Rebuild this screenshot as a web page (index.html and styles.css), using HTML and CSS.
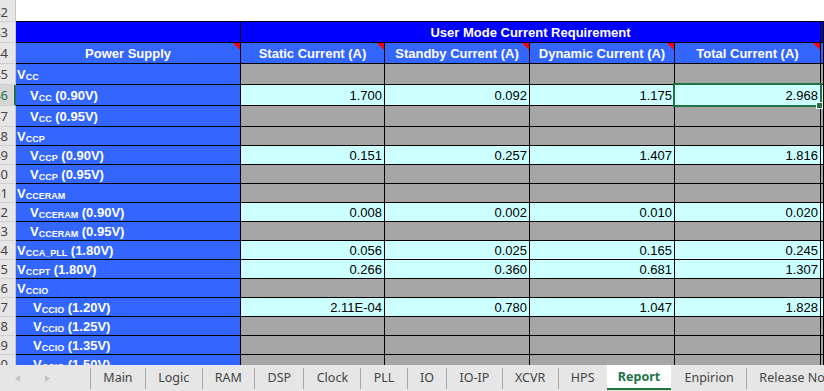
FILE: index.html
```html
<!DOCTYPE html>
<html lang="en">

<head>
    <meta charset="UTF-8">
    <meta name="viewport" content="width=device-width, initial-scale=1.0">
    <title>Report - User Mode Current Requirement</title>
    <link rel="stylesheet" href="styles.css">
</head>

<body>
    <!-- Lembar kerja -->
    <div class="sheet">
        <div class="row first">
            <div class="rh top-rh">42</div>
            <div class="c blank"></div>
            <div class="c blank"></div>
            <div class="c blank"></div>
            <div class="c blank"></div>
            <div class="c blank"></div>
            <div class="c blank"></div>
        </div>

        <div class="row tall">
            <div class="rh">43</div>
            <div class="c top"></div>
            <div class="c top merged">User Mode Current Requirement</div>
            <div class="c top"></div>
        </div>

        <div class="row tall">
            <div class="rh">44</div>
            <div class="c hd">Power Supply</div>
            <div class="c hd">Static Current (A)</div>
            <div class="c hd">Standby Current (A)</div>
            <div class="c hd">Dynamic Current (A)</div>
            <div class="c hd">Total Current (A)</div>
            <div class="c hd plain"></div>
        </div>

        <div class="row tall">
            <div class="rh">45</div>
            <div class="c lbl"><span>V<sub>CC</sub></span></div>
            <div class="c na"></div>
            <div class="c na"></div>
            <div class="c na"></div>
            <div class="c na"></div>
            <div class="c na"></div>
        </div>

        <div class="row tall">
            <div class="rh on">46</div>
            <div class="c lbl ind1"><span>V<sub>CC</sub> (0.90V)</span></div>
            <div class="c num">1.700</div>
            <div class="c num">0.092</div>
            <div class="c num">1.175</div>
            <div class="c num sel">2.968</div>
            <div class="c num"></div>
        </div>

        <div class="row tall">
            <div class="rh">47</div>
            <div class="c lbl ind1"><span>V<sub>CC</sub> (0.95V)</span></div>
            <div class="c na"></div>
            <div class="c na"></div>
            <div class="c na"></div>
            <div class="c na"></div>
            <div class="c na"></div>
        </div>

        <div class="row">
            <div class="rh">48</div>
            <div class="c lbl"><span>V<sub>CCP</sub></span></div>
            <div class="c na"></div>
            <div class="c na"></div>
            <div class="c na"></div>
            <div class="c na"></div>
            <div class="c na"></div>
        </div>

        <div class="row">
            <div class="rh">49</div>
            <div class="c lbl ind1"><span>V<sub>CCP</sub> (0.90V)</span></div>
            <div class="c num">0.151</div>
            <div class="c num">0.257</div>
            <div class="c num">1.407</div>
            <div class="c num">1.816</div>
            <div class="c num"></div>
        </div>

        <div class="row">
            <div class="rh">50</div>
            <div class="c lbl ind1"><span>V<sub>CCP</sub> (0.95V)</span></div>
            <div class="c na"></div>
            <div class="c na"></div>
            <div class="c na"></div>
            <div class="c na"></div>
            <div class="c na"></div>
        </div>

        <div class="row">
            <div class="rh">51</div>
            <div class="c lbl"><span>V<sub>CCERAM</sub></span></div>
            <div class="c na"></div>
            <div class="c na"></div>
            <div class="c na"></div>
            <div class="c na"></div>
            <div class="c na"></div>
        </div>

        <div class="row">
            <div class="rh">52</div>
            <div class="c lbl ind1"><span>V<sub>CCERAM</sub> (0.90V)</span></div>
            <div class="c num">0.008</div>
            <div class="c num">0.002</div>
            <div class="c num">0.010</div>
            <div class="c num">0.020</div>
            <div class="c num"></div>
        </div>

        <div class="row">
            <div class="rh">53</div>
            <div class="c lbl ind1"><span>V<sub>CCERAM</sub> (0.95V)</span></div>
            <div class="c na"></div>
            <div class="c na"></div>
            <div class="c na"></div>
            <div class="c na"></div>
            <div class="c na"></div>
        </div>

        <div class="row">
            <div class="rh">54</div>
            <div class="c lbl"><span>V<sub>CCA_PLL</sub> (1.80V)</span></div>
            <div class="c num">0.056</div>
            <div class="c num">0.025</div>
            <div class="c num">0.165</div>
            <div class="c num">0.245</div>
            <div class="c num"></div>
        </div>

        <div class="row">
            <div class="rh">55</div>
            <div class="c lbl"><span>V<sub>CCPT</sub> (1.80V)</span></div>
            <div class="c num">0.266</div>
            <div class="c num">0.360</div>
            <div class="c num">0.681</div>
            <div class="c num">1.307</div>
            <div class="c num"></div>
        </div>

        <div class="row">
            <div class="rh">56</div>
            <div class="c lbl"><span>V<sub>CCIO</sub></span></div>
            <div class="c na"></div>
            <div class="c na"></div>
            <div class="c na"></div>
            <div class="c na"></div>
            <div class="c na"></div>
        </div>

        <div class="row">
            <div class="rh">57</div>
            <div class="c lbl ind2"><span>V<sub>CCIO</sub> (1.20V)</span></div>
            <div class="c num">2.11E-04</div>
            <div class="c num">0.780</div>
            <div class="c num">1.047</div>
            <div class="c num">1.828</div>
            <div class="c num"></div>
        </div>

        <div class="row">
            <div class="rh">58</div>
            <div class="c lbl ind2"><span>V<sub>CCIO</sub> (1.25V)</span></div>
            <div class="c na"></div>
            <div class="c na"></div>
            <div class="c na"></div>
            <div class="c na"></div>
            <div class="c na"></div>
        </div>

        <div class="row">
            <div class="rh">59</div>
            <div class="c lbl ind2"><span>V<sub>CCIO</sub> (1.35V)</span></div>
            <div class="c na"></div>
            <div class="c na"></div>
            <div class="c na"></div>
            <div class="c na"></div>
            <div class="c na"></div>
        </div>

        <div class="row">
            <div class="rh">60</div>
            <div class="c lbl ind2"><span>V<sub>CCIO</sub> (1.50V)</span></div>
            <div class="c na"></div>
            <div class="c na"></div>
            <div class="c na"></div>
            <div class="c na"></div>
            <div class="c na"></div>
        </div>
    </div>

    <!-- Tab sheet -->
    <div class="tabbar">
        <div class="nav">
            <svg width="90" height="26" viewBox="0 0 90 26">
                <path d="M20 10 L15 13.5 L20 17 Z" fill="#c4c4c4" />
                <path d="M45 10 L50 13.5 L45 17 Z" fill="#c4c4c4" />
            </svg>
        </div>
        <div class="tab">Main</div>
        <div class="tab">Logic</div>
        <div class="tab">RAM</div>
        <div class="tab">DSP</div>
        <div class="tab">Clock</div>
        <div class="tab">PLL</div>
        <div class="tab">IO</div>
        <div class="tab">IO-IP</div>
        <div class="tab">XCVR</div>
        <div class="tab">HPS</div>
        <div class="tab active">Report</div>
        <div class="tab">Enpirion</div>
        <div class="tab">Release Notes</div>
    </div>
</body>

</html>
```

FILE: styles.css
```css
/* Gaya umum */
body {
    margin: 0;
    width: 824px;
    height: 391px;
    overflow: hidden;
    background-color: #ffffff;
    font-family: 'Liberation Sans', Arial, sans-serif;
    font-size: 13px;
}

/* Area lembar kerja */
.sheet {
    height: 365px;
    overflow: hidden;
}

.row {
    display: grid;
    grid-template-columns: 16px 225px 144px 145px 145px 146px 1fr;
    height: 19px;
}

.row.tall {
    height: 21px;
}

.row.first {
    height: 22px;
}

/* Sel dasar */
.c {
    box-sizing: border-box;
    display: flex;
    align-items: center;
    border-right: 1px solid #000;
    border-bottom: 1px solid #000;
    white-space: nowrap;
    overflow: hidden;
    line-height: 15px;
}

.blank {
    border-right: none;
}

/* Header baris */
.rh {
    box-sizing: border-box;
    display: flex;
    align-items: center;
    justify-content: flex-end;
    padding-right: 7px;
    background-color: #e6e6e6;
    border-right: 1px solid #c6c6c6;
    border-bottom: 1px solid #cfcfcf;
    color: #444;
    font-family: 'Noto Sans', sans-serif;
    font-size: 13px;
    line-height: 15px;
    white-space: nowrap;
    overflow: hidden;
}

.top-rh {
    align-items: flex-end;
    padding-bottom: 1px;
}

.rh.on {
    background-color: #d6d6d6;
    color: #217346;
    border-right: 2px solid #217346;
    padding-right: 6px;
}

/* Judul tabel */
.top {
    background-color: #0000ff;
    color: #fff;
    font-weight: bold;
    justify-content: center;
}

.merged {
    grid-column: span 4;
}

.hd {
    position: relative;
    background-color: #3366ff;
    color: #fff;
    font-weight: bold;
    justify-content: center;
}

/* Penanda komentar */
.hd::after {
    content: "";
    position: absolute;
    top: 0;
    right: 0;
    border-style: solid;
    border-width: 0 7px 7px 0;
    border-color: transparent #ff0000 transparent transparent;
}

.hd.plain::after {
    display: none;
}

/* Label catu daya */
.lbl {
    background-color: #3366ff;
    color: #fff;
    font-weight: bold;
    padding-left: 1px;
}

.ind1 {
    padding-left: 14px;
}

.ind2 {
    padding-left: 17px;
}

sub {
    font-size: 9px;
    line-height: 1;
    vertical-align: -1px;
}

/* Nilai arus */
.num {
    background-color: #ccffff;
    color: #000;
    justify-content: flex-end;
    padding-right: 2px;
}

.na {
    background-color: #a6a6a6;
}

/* Sel terpilih */
.sel {
    position: relative;
    overflow: visible;
}

.sel::before {
    content: "";
    position: absolute;
    left: -2px;
    top: -2px;
    right: -2px;
    bottom: -2px;
    border: 2px solid #217346;
}

.sel::after {
    content: "";
    position: absolute;
    right: -3px;
    bottom: -4px;
    width: 5px;
    height: 5px;
    background-color: #217346;
    border: 1px solid #fff;
}

/* Tab sheet */
.tabbar {
    display: flex;
    align-items: flex-start;
    height: 26px;
    background-color: #e6e6e6;
    overflow: hidden;
    font-family: 'Noto Sans', sans-serif;
    font-size: 12.5px;
    color: #444;
}

.nav {
    flex: none;
    width: 90px;
    height: 26px;
}

.nav svg {
    display: block;
}

.tab {
    flex: none;
    box-sizing: border-box;
    margin-top: 3px;
    height: 21px;
    line-height: 19px;
    padding: 0 12.3px;
    border-left: 1px solid #a6a6a6;
    white-space: nowrap;
}

.tab.active {
    margin-top: 0;
    height: 25px;
    line-height: 23px;
    padding: 0 11px;
    background-color: #ffffff;
    color: #217346;
    font-weight: bold;
    border-left: none;
    border-bottom: 2px solid #217346;
}

.tab.active + .tab {
    border-left-color: transparent;
}
```
